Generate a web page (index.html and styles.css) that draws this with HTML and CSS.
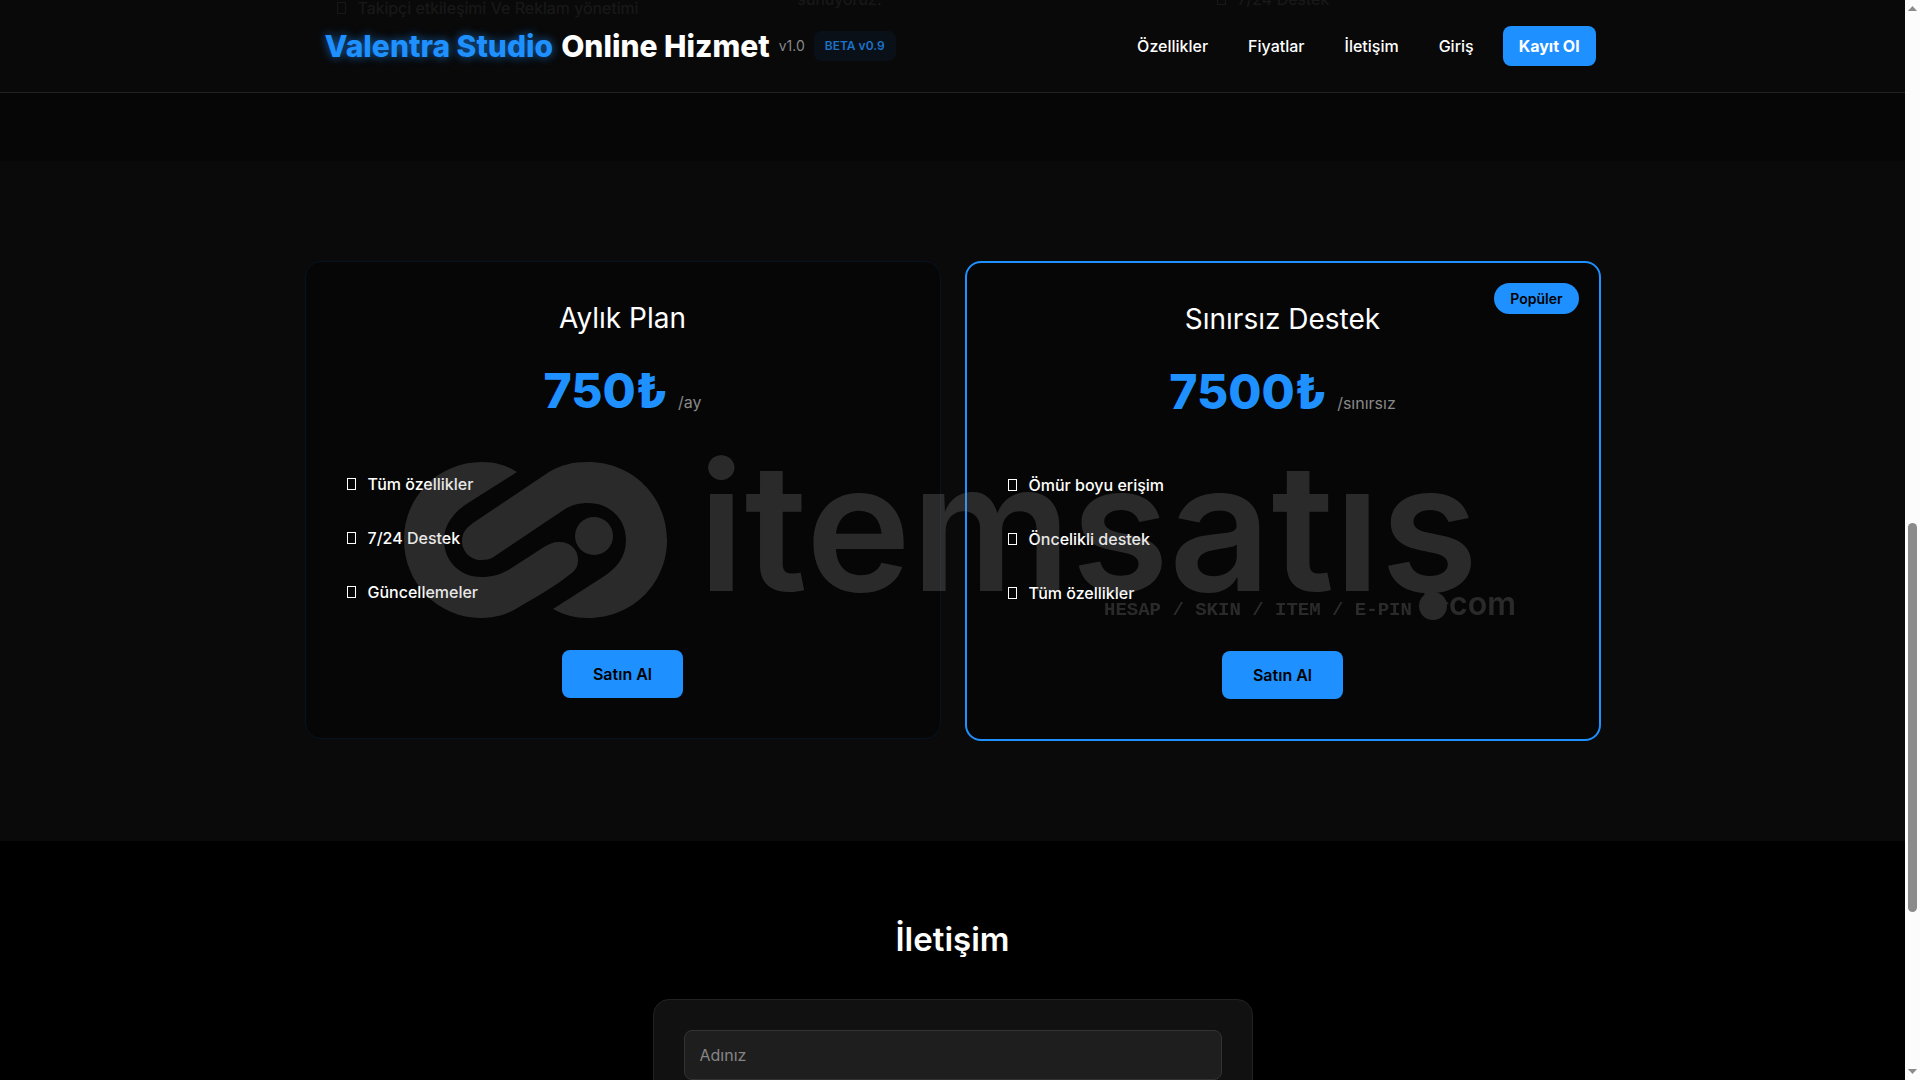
FILE: index.html
```html
<!DOCTYPE html>
<html lang="tr">
<head>
    <meta charset="UTF-8">
    <meta name="viewport" content="width=device-width, initial-scale=1.0">
    <title>Valentra Studio Online Hizmet</title>
    <link rel="stylesheet" href="styles.css">
</head>
<body>
    <div class="page">
        <header class="header">
            <div class="container header-inner">
                <div class="brand">
                    <a class="logo" href="#"><span class="logo-glow">Valentra Studio</span> <span>Online Hizmet</span></a>
                    <span class="version">v1.0</span>
                    <span class="beta">BETA v0.9</span>
                </div>
                <nav class="nav">
                    <a href="#ozellikler">Özellikler</a>
                    <a href="#fiyatlar">Fiyatlar</a>
                    <a href="#iletisim">İletişim</a>
                    <a href="#">Giriş</a>
                    <a class="nav-btn" href="#">Kayıt Ol</a>
                </nav>
            </div>
        </header>

        <section class="features" id="ozellikler">
            <div class="container features-grid">
                <p class="feature item low">Takipçi etkileşimi Ve Reklam yönetimi</p>
                <p class="feature indent">sunuyoruz.</p>
                <p class="feature item">7/24 Destek</p>
            </div>
        </section>

        <section class="pricing" id="fiyatlar">
            <div class="container pricing-grid">
                <div class="plan">
                    <h3 class="plan-name">Aylık Plan</h3>
                    <p class="price">750₺ <span class="period">/ay</span></p>
                    <ul class="plan-list">
                        <li class="item">Tüm özellikler</li>
                        <li class="item">7/24 Destek</li>
                        <li class="item">Güncellemeler</li>
                    </ul>
                    <button class="buy" type="button">Satın Al</button>
                </div>
                <div class="plan popular">
                    <span class="badge">Popüler</span>
                    <h3 class="plan-name">Sınırsız Destek</h3>
                    <p class="price">7500₺ <span class="period">/sınırsız</span></p>
                    <ul class="plan-list">
                        <li class="item">Ömür boyu erişim</li>
                        <li class="item">Öncelikli destek</li>
                        <li class="item">Tüm özellikler</li>
                    </ul>
                    <button class="buy" type="button">Satın Al</button>
                </div>
            </div>
        </section>

        <section class="contact" id="iletisim">
            <h2 class="contact-title">İletişim</h2>
            <form class="contact-form">
                <input class="field" type="text" name="ad" placeholder="Adınız" aria-label="Adınız">
            </form>
        </section>
    </div>

    <div class="scrollbar" aria-hidden="true">
        <svg width="9" height="5" viewBox="0 0 9 5"><path d="M4.5 0L9 5H0z"/></svg>
        <div class="track"><div class="thumb"></div></div>
        <svg width="9" height="5" viewBox="0 0 9 5"><path d="M0 0h9L4.500 5z"/></svg>
    </div>

    <svg class="watermark" width="1112" height="172" viewBox="0 -8 1112 172">
        <clipPath id="wm-clip"><rect x="270" y="-8" width="842" height="150"/></clipPath>
        <path d="M113 10C102 3 91 0 78 0C34 0 0 35 0 78C0 121 34 156 77 156C92 156 104 152 115 145C132 135 150 125 165 113C171 109 174 105 174 98C174 87 166 80 155 80C149 80 145 82 140 85L106 107C96 113 88 115 77 115C56 115 40 99 40 78C40 62 50 50 64 41Z"/>
        <path d="M69 61L145 10C157 3 168 0 184 0C229 0 263 35 263 78C263 121 229 156 184 156C171 156 160 153 149 147L199 115C213 106 222 95 222 78C222 57 206 41 184 41C175 41 168 43 161 47L91 94C87 97 83 98 77 98C67 98 58 90 58 79C58 71 62 66 69 61Z"/>
        <circle cx="190" cy="74" r="19"/>
        <!-- the dot of ".com" takes the place of the cedilla's tail -->
        <text class="wm-name" x="294" y="129" clip-path="url(#wm-clip)">itemsatış</text>
        <text class="wm-tag" x="700" y="153">HESAP / SKIN / ITEM / E-PIN</text>
        <circle cx="1029" cy="144" r="14"/>
        <text class="wm-com" x="1045" y="153">com</text>
    </svg>
</body>
</html>
```
FILE: styles.css
```css
*,
*::before {
    margin: 0;
    padding: 0;
    box-sizing: border-box;
}

body {
    display: flex;
    height: 100vh;
    overflow: hidden;
    background-color: #000;
    color: #fff;
    font-family: Inter, "Open Sans", sans-serif;
    font-size: 16px;
    line-height: 24px;
}

a {
    color: inherit;
    text-decoration: none;
}

.page {
    position: relative;
    flex: 1;
    overflow: hidden;
}

.container {
    width: 100%;
    max-width: 1296px;
    margin: 0 auto;
}

/* header */
.header {
    position: absolute;
    top: 0;
    left: 0;
    right: 0;
    z-index: 10;
    background-color: rgba(10, 10, 10, 0.94);
    border-bottom: 1px solid #222;
}

.header-inner {
    display: flex;
    justify-content: space-between;
    align-items: center;
    padding: 26px 5px 26px 20px;
}

.brand {
    display: flex;
    align-items: center;
    gap: 9px;
}

.logo {
    display: flex;
    gap: 8px;
    font-size: 30px;
    font-weight: 800;
    line-height: 40px;
}

.logo-glow {
    color: #1e90ff;
    text-shadow: 0 0 10px rgba(30, 144, 255, 0.7);
}

.version {
    color: #888;
    font-size: 14px;
}

.beta {
    padding: 3px 11px;
    border-radius: 8px;
    background-color: rgba(30, 144, 255, 0.06);
    color: #1c72c8;
    font-size: 12px;
    font-weight: 600;
}

.nav {
    display: flex;
    align-items: center;
    gap: 40px;
    font-weight: 500;
}

.nav-btn {
    margin-left: -11px;
    padding: 8px 16px;
    border-radius: 8px;
    background-color: #1e90ff;
    font-weight: 700;
}

/* features */
.features {
    margin-top: -13px;
    padding-bottom: 140px;
    background-color: #060606;
}

.features-grid {
    display: grid;
    grid-template-columns: repeat(3, 1fr);
    gap: 24px;
}

.feature {
    height: 34px;
    padding-left: 32px;
    white-space: nowrap;
}

.low {
    padding-top: 9px;
}

.indent {
    padding-left: 53px;
}

.item::before {
    content: "";
    display: inline-block;
    width: 9px;
    height: 12px;
    margin-right: 12px;
    border: 1px solid currentColor;
}

/* pricing */
.pricing {
    padding: 100px 0;
    background-color: #0a0a0a;
}

.pricing-grid {
    display: grid;
    grid-template-columns: 1fr 1fr;
    align-items: start;
    gap: 24px;
}

.plan {
    position: relative;
    padding: 40px;
    border: 1px solid #07131f;
    border-radius: 16px;
    background-color: #060606;
    text-align: center;
}

.popular {
    border: 2px solid #1e90ff;
}

.badge {
    position: absolute;
    top: 20px;
    right: 20px;
    padding: 4px 16px;
    border-radius: 20px;
    background-color: #1e90ff;
    color: #000;
    font-size: 14px;
    font-weight: 600;
    line-height: 23px;
}

.plan-name {
    font-size: 28px;
    font-weight: 400;
    line-height: 32px;
    margin-bottom: 16px;
}

.price {
    color: #1e90ff;
    font-size: 48px;
    font-weight: 800;
    line-height: 82px;
    margin-bottom: 14px;
}

.period {
    color: #888;
    font-size: 16px;
    font-weight: 400;
}

.plan-list {
    padding-left: 1px;
    margin-bottom: 31px;
    list-style: none;
    text-align: left;
    font-weight: 500;
}

.plan-list li {
    padding: 15px 0;
}

.buy {
    padding: 12px 31px;
    border: none;
    border-radius: 8px;
    background-color: #1e90ff;
    color: #000;
    font-family: inherit;
    font-size: 16px;
    font-weight: 600;
    line-height: 24px;
    cursor: pointer;
}

/* contact */
.contact {
    padding: 74px 0;
}

.contact-title {
    margin-bottom: 36px;
    font-size: 33px;
    font-weight: 600;
    line-height: 48px;
    text-align: center;
}

.contact-form {
    max-width: 600px;
    margin: 0 auto;
    padding: 30px;
    border: 1px solid #222;
    border-radius: 16px;
    background-color: #111;
}

.field {
    width: 100%;
    height: 50px;
    padding: 0 15px;
    border: 1px solid #333;
    border-radius: 8px;
    background-color: #1e1e1e;
    color: #fff;
    font-family: inherit;
    font-size: 16px;
}

.field::placeholder {
    color: #858585;
}

/* scrollbar */
.scrollbar {
    display: flex;
    flex-direction: column;
    align-items: center;
    width: 15px;
    padding: 6px 0;
    background-color: #fcfcfc;
    fill: #8b8b8b;
}

.track {
    flex: 1;
    padding-top: 512px;
}

.thumb {
    width: 9px;
    height: 389px;
    border-radius: 5px;
    background-color: #8b8b8b;
}

/* watermark */
.watermark {
    position: fixed;
    top: 50%;
    left: 50%;
    z-index: 20;
    transform: translate(-50%, -50%);
    fill: #a0a0a0;
    opacity: 0.24;
    pointer-events: none;
}

.wm-name {
    font-size: 178px;
    font-weight: 600;
}

.wm-tag {
    font-family: "Liberation Mono", monospace;
    font-size: 19px;
    font-weight: 700;
}

.wm-com {
    font-size: 32px;
    font-weight: 600;
}
```
